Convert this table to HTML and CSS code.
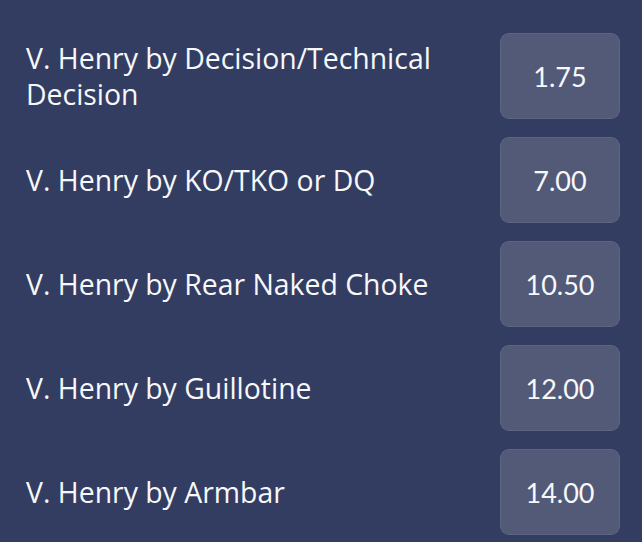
FILE: index.html
```html
<!DOCTYPE html>
<html>
<head>
<meta charset="utf-8">
<link rel="stylesheet" href="styles.css">
</head>
<body>
<div class="market">
  <div class="row"><div class="label">V. Henry by Decision/Technical Decision</div><button class="odds">1.75</button></div>
  <div class="row"><div class="label">V. Henry by KO/TKO or DQ</div><button class="odds">7.00</button></div>
  <div class="row"><div class="label">V. Henry by Rear Naked Choke</div><button class="odds">10.50</button></div>
  <div class="row"><div class="label">V. Henry by Guillotine</div><button class="odds">12.00</button></div>
  <div class="row"><div class="label">V. Henry by Armbar</div><button class="odds">14.00</button></div>
</div>
</body>
</html>
```
FILE: styles.css
```css
html, body {
  margin: 0;
  padding: 0;
  background: #333d62;
  height: 100%;
}
.market {
  display: flex;
  flex-direction: column;
  gap: 18px;
  padding: 33px 22px 0 26px;
}
.row {
  display: flex;
  align-items: center;
  gap: 40px;
}
.label {
  flex: 1;
  font-family: "Open Sans", sans-serif;
  font-weight: 500;
  font-size: 28.4px;
  line-height: 36px;
  color: #f7f8fa;
}
.odds {
  flex: 0 0 120px;
  height: 86px;
  box-sizing: border-box;
  background: #525a78;
  border: 1px solid #5d6583;
  border-radius: 9px;
  font-family: Lato, sans-serif;
  font-size: 27px;
  color: #f7f8fa;
  padding: 0;
}
```
